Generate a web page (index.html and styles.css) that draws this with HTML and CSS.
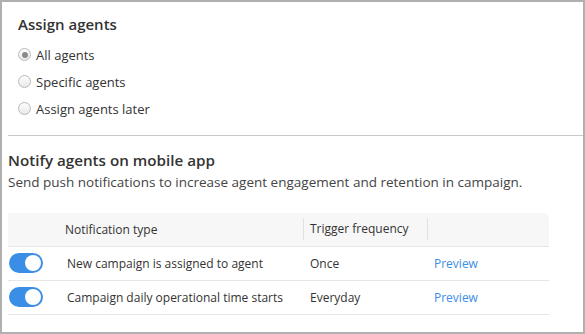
FILE: index.html
```html
<!DOCTYPE html>
<html lang="en">
<head>
  <meta charset="UTF-8">
  <title>Assign agents</title>
  <link rel="stylesheet" href="styles.css">
</head>
<body>
  <div class="frame">
    <section class="assign">
      <h2>Assign agents</h2>
      <div class="radio-list">
        <label class="radio"><span class="dot checked"></span>All agents</label>
        <label class="radio"><span class="dot"></span>Specific agents</label>
        <label class="radio"><span class="dot"></span>Assign agents later</label>
      </div>
    </section>

    <hr class="divider">

    <section class="notify">
      <h2>Notify agents on mobile app</h2>
      <p class="desc">Send push notifications to increase agent engagement and retention in campaign.</p>

      <table class="notif-table">
        <thead>
          <tr>
            <th class="col-toggle"></th>
            <th class="col-type">Notification type</th>
            <th class="col-freq"><span class="sep">Trigger frequency</span></th>
            <th class="col-action"><span class="sep"></span></th>
          </tr>
        </thead>
        <tbody>
          <tr>
            <td class="col-toggle"><span class="toggle"></span></td>
            <td class="col-type">New campaign is assigned to agent</td>
            <td class="col-freq">Once</td>
            <td class="col-action"><a href="#">Preview</a></td>
          </tr>
          <tr>
            <td class="col-toggle"><span class="toggle"></span></td>
            <td class="col-type">Campaign daily operational time starts</td>
            <td class="col-freq">Everyday</td>
            <td class="col-action"><a href="#">Preview</a></td>
          </tr>
        </tbody>
      </table>
    </section>
  </div>
</body>
</html>
```

FILE: styles.css
```css
* {
  box-sizing: border-box;
}
body {
  margin: 0;
  font-family: "Open Sans", Arial, sans-serif;
  color: #333;
  background: #fff;
}
.frame {
  width: 585px;
  height: 334px;
  border: 2px solid #b0b0b0;
  overflow: hidden;
}
h2 {
  margin: 0;
  font-size: 15px;
  font-weight: 600;
  line-height: 20px;
  color: #333;
}
.notify h2 {
  font-size: 15.2px;
}
.assign {
  padding: 12px 0 0 16px;
  height: 133px;
}
.radio-list {
  margin-top: 7px;
  display: flex;
  flex-direction: column;
}
.radio {
  display: flex;
  align-items: center;
  height: 27px;
  font-size: 13px;
  color: #333;
}
.dot {
  width: 13px;
  height: 13px;
  border-radius: 50%;
  border: 1px solid #b8b8b8;
  background: linear-gradient(#fdfdfd, #e9e9e9);
  margin-right: 5px;
  position: relative;
}
.dot.checked::after {
  content: "";
  position: absolute;
  left: 2.5px;
  top: 2.5px;
  width: 6px;
  height: 6px;
  border-radius: 50%;
  background: #8a8a8a;
}
.divider {
  margin: 0 0 0 6px;
  border: none;
  border-top: 1px solid #c8c8c8;
}
.notify {
  padding: 14px 0 0 6px;
}
.desc {
  margin: 3px 0 0;
  font-size: 13.5px;
  line-height: 19px;
  color: #444;
}
.notif-table {
  margin-top: 21px;
  width: 541px;
  border-collapse: collapse;
  font-size: 12px;
  color: #333;
}
.notif-table th {
  background: #f7f7f7;
  font-weight: 400;
  text-align: left;
  height: 33px;
  padding: 0;
  border-bottom: 1px solid #e6e6e6;
}
.notif-table thead th:last-child {
  border-top-right-radius: 6px;
}
.notif-table td {
  height: 34px;
  padding: 0;
  border-bottom: 1px solid #e6e6e6;
  font-size: 12px;
}
.col-toggle {
  width: 49px;
}
.col-type {
  width: 246px;
}
.notif-table th.col-type {
  padding-left: 8px;
}
.notif-table td.col-type {
  padding-left: 10px;
}
.col-freq {
  width: 124px;
}
.notif-table td.col-freq,
.notif-table td.col-action {
  padding-left: 7px;
}
.sep {
  display: block;
  border-left: 1px solid #e2e2e2;
  padding-left: 6px;
  line-height: 22px;
  height: 22px;
}
.toggle {
  display: block;
  width: 34px;
  height: 20px;
  border-radius: 10px;
  background: #3a8ee6;
  margin-left: 1px;
  position: relative;
}
.toggle::after {
  content: "";
  position: absolute;
  right: 2px;
  top: 2px;
  width: 16px;
  height: 16px;
  border-radius: 50%;
  background: #fff;
}
.col-action a {
  color: #3a8ee6;
  text-decoration: none;
}
```
